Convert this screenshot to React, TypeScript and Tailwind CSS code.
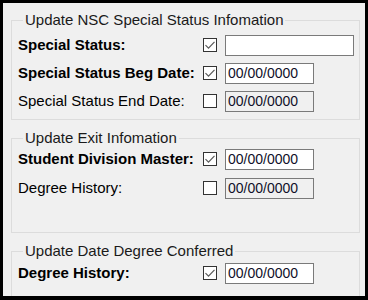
import React from 'react';

type Row = {
  label: string;
  bold?: boolean;
  checked: boolean;
  value: string;
  wide?: boolean;
};

const groups: { title: string; rows: Row[]; box: string }[] = [
  {
    title: 'Update NSC Special Status Infomation',
    box: 'h-[109px] pt-[5px] gap-[6px]',
    rows: [
      { label: 'Special Status:', bold: true, checked: true, value: '', wide: true },
      { label: 'Special Status Beg Date:', bold: true, checked: true, value: '00/00/0000' },
      { label: 'Special Status End Date:', checked: false, value: '00/00/0000' },
    ],
  },
  {
    title: 'Update Exit Infomation',
    box: 'h-[104px] pt-[1px] gap-[7px]',
    rows: [
      { label: 'Student Division Master:', bold: true, checked: true, value: '00/00/0000' },
      { label: 'Degree History:', checked: false, value: '00/00/0000' },
    ],
  },
  {
    title: 'Update Date Degree Conferred',
    box: 'h-[60px] pt-[2px]',
    rows: [{ label: 'Degree History:', bold: true, checked: true, value: '00/00/0000' }],
  },
];

function CheckBox({ checked }: { checked: boolean }) {
  return (
    <div className="flex size-[14px] items-center justify-center border border-[#333333] bg-white">
      {checked && (
        <svg width="12" height="12" viewBox="0 0 12 12" fill="none">
          <path d="M1.5 6.2 L4.5 9.2 L10.5 2.8" stroke="#5a5a5a" strokeWidth="1.2" />
        </svg>
      )}
    </div>
  );
}

function FieldRow({ row }: { row: Row }) {
  return (
    <div className="flex h-[22px] items-center">
      <div className={`w-[185px] text-[15px] text-black ${row.bold ? 'font-bold' : ''}`}>{row.label}</div>
      <CheckBox checked={row.checked} />
      <div
        className={`ml-[8px] flex h-[21px] items-center border border-[#7a7a7a] px-[2px] text-[14px] text-[#10102a] ${
          row.wide ? 'w-[129px]' : 'w-[89px]'
        } ${row.checked ? 'bg-white' : 'bg-[#f0f0f0]'}`}
      >
        {row.value}
      </div>
    </div>
  );
}

export default function App() {
  return (
    <div className="h-[300px] w-[368px] overflow-hidden border-[3px] border-b-4 border-black bg-[#f0f0f0] font-['Liberation_Sans',Arial,sans-serif]">
      <div className="flex flex-col gap-[9px] pl-[8px] pr-[5px] pt-[8px]">
        {groups.map((g) => (
          <fieldset key={g.title} className={`${g.box} flex flex-col border border-[#dcdcdc] pl-[6px]`}>
            <legend className="ml-[5px] px-[2px] text-[15px] leading-[18px] text-[#1a1a1a]">{g.title}</legend>
            {g.rows.map((r) => (
              <FieldRow key={r.label} row={r} />
            ))}
          </fieldset>
        ))}
      </div>
    </div>
  );
}
